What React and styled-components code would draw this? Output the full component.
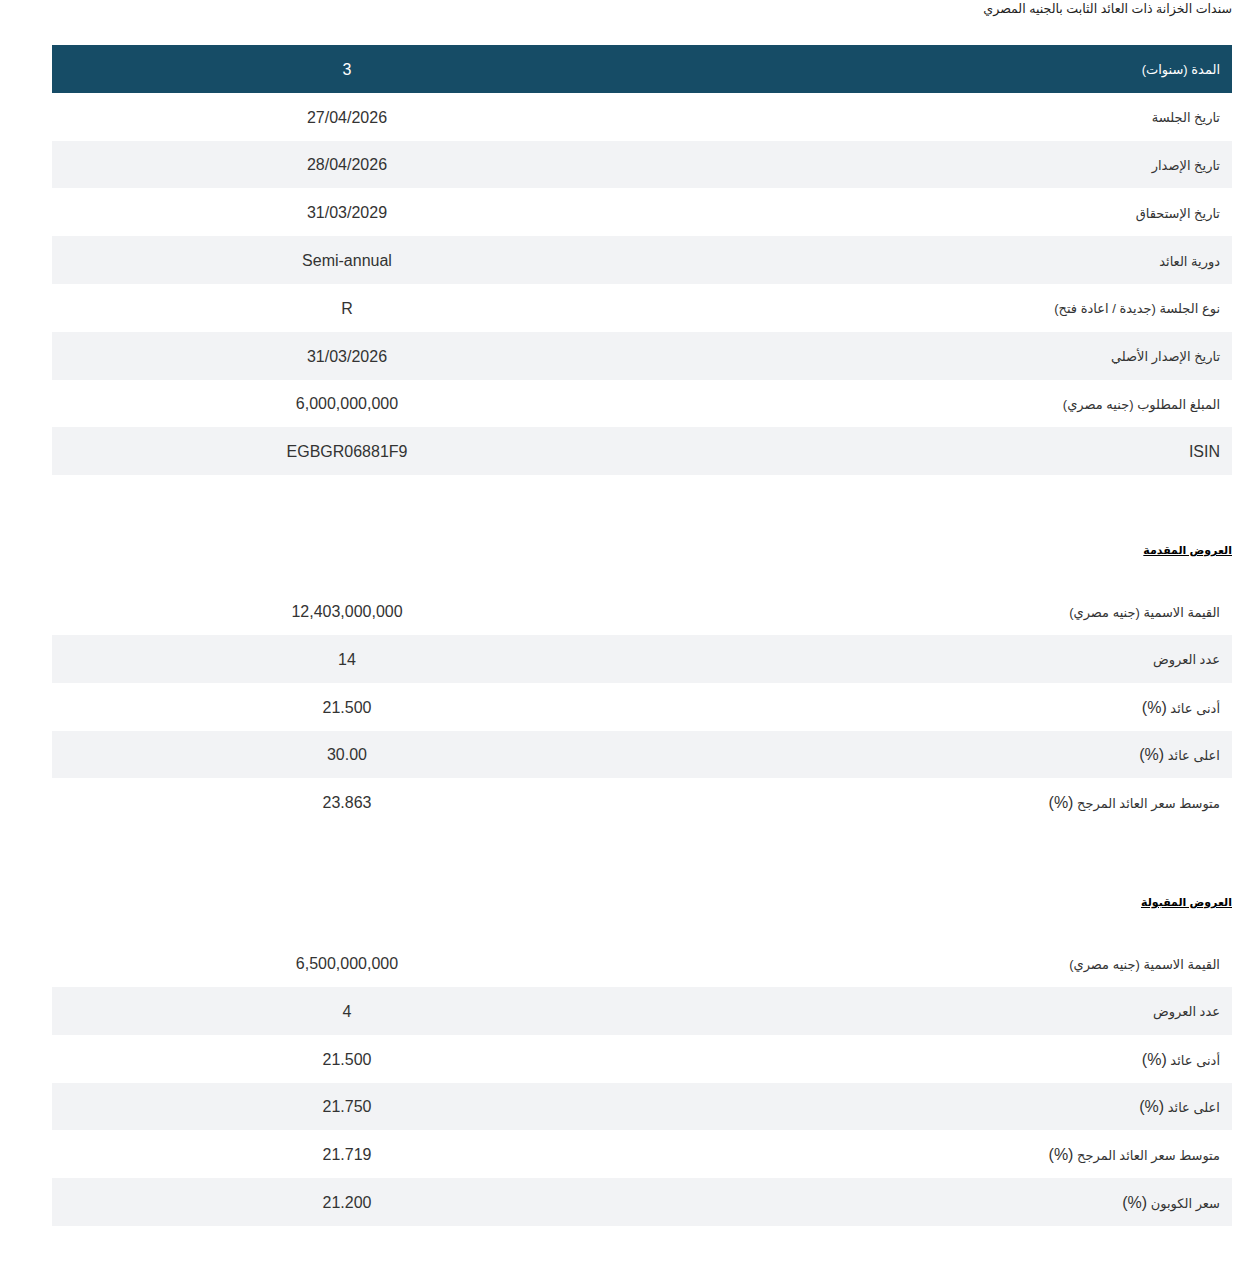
import React from "react";
import styled, { createGlobalStyle } from "styled-components";

const Global = createGlobalStyle`
  html, body { margin: 0; padding: 0; background: #fff; }
  body { font-family: "Liberation Sans", Arial, "DejaVu Sans", sans-serif; color: #333; }
`;

const Page = styled.div`
  direction: rtl;
  padding: 1px 6px 40px 52px;
`;

const Title = styled.div`
  font-size: 12.6px;
  line-height: 17px;
  color: #222;
  margin-left: -44px;
  margin-bottom: 27px;
`;

const Table = styled.table`
  width: 100%;
  border-collapse: collapse;
  table-layout: fixed;
`;

const Row = styled.tr`
  height: 47.8px;
  background: ${(p) => (p.$head ? "#164c66" : p.$striped ? "#f2f3f5" : "#fff")};
  color: ${(p) => (p.$head ? "#fff" : "#333")};
`;

const Label = styled.td`
  width: 50%;
  text-align: right;
  padding: 2px 12px 0;
  font-size: ${(p) => (p.$latin ? 16 : 13)}px;
`;

const Latin = styled.span`
  font-size: 16px;
`;

const Value = styled.td`
  width: 50%;
  text-align: center;
  padding: 2px 12px 0;
  font-size: 16px;
`;

const Heading = styled.div`
  font-size: 11px;
  font-weight: bold;
  text-decoration: underline;
  color: #000;
  line-height: 16px;
  margin: ${(p) => p.$top}px 0 29px 0;
`;

const main = [
  ["المدة (سنوات)", "3"],
  ["تاريخ الجلسة", "27/04/2026"],
  ["تاريخ الإصدار", "28/04/2026"],
  ["تاريخ الإستحقاق", "31/03/2029"],
  ["دورية العائد", "Semi-annual"],
  ["نوع الجلسة (جديدة / اعادة فتح)", "R"],
  ["تاريخ الإصدار الأصلي", "31/03/2026"],
  ["المبلغ المطلوب (جنيه مصري)", "6,000,000,000"],
  ["ISIN", "EGBGR06881F9"],
];

const offered = [
  ["القيمة الاسمية (جنيه مصري)", "12,403,000,000"],
  ["عدد العروض", "14"],
  ["أدنى عائد (%)", "21.500"],
  ["اعلى عائد (%)", "30.00"],
  ["متوسط سعر العائد المرجح (%)", "23.863"],
];

const accepted = [
  ["القيمة الاسمية (جنيه مصري)", "6,500,000,000"],
  ["عدد العروض", "4"],
  ["أدنى عائد (%)", "21.500"],
  ["اعلى عائد (%)", "21.750"],
  ["متوسط سعر العائد المرجح (%)", "21.719"],
  ["سعر الكوبون (%)", "21.200"],
];

function LabelText({ text }) {
  if (text.endsWith("(%)")) {
    return (
      <>
        {text.slice(0, -3)}
        <Latin>(%)</Latin>
      </>
    );
  }
  return text;
}

function DataTable({ rows, withHead }) {
  return (
    <Table>
      <tbody>
        {rows.map(([l, v], i) => {
          const head = withHead && i === 0;
          const striped = withHead ? i > 0 && i % 2 === 0 : i % 2 === 1;
          return (
            <Row key={i} $head={head} $striped={striped}>
              <Label $latin={l === "ISIN"}>
                <LabelText text={l} />
              </Label>
              <Value>{v}</Value>
            </Row>
          );
        })}
      </tbody>
    </Table>
  );
}

export default function App() {
  return (
    <>
      <Global />
      <Page>
        <Title>سندات الخزانة ذات العائد الثابت بالجنيه المصري</Title>
        <DataTable rows={main} withHead />
        <Heading $top={67}>العروض المقدمة</Heading>
        <DataTable rows={offered} />
        <Heading $top={68}>العروض المقبولة</Heading>
        <DataTable rows={accepted} />
      </Page>
    </>
  );
}
